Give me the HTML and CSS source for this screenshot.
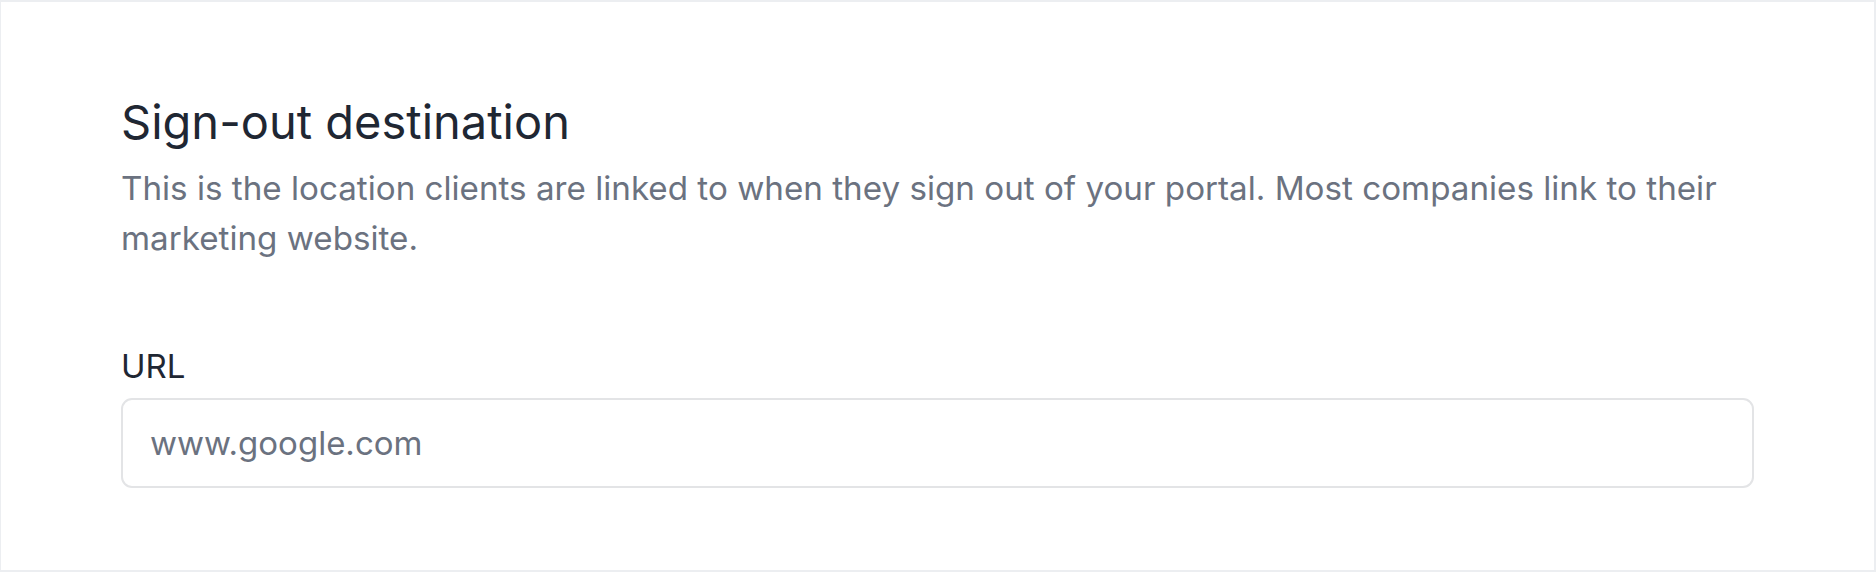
FILE: index.html
```html
<!DOCTYPE html>
<html lang="en">

<head>
  <meta charset="UTF-8">
  <title>Sign-out destination</title>
  <link rel="stylesheet" href="styles.css">
</head>

<body>
  <div class="panel">
    <div class="section">
      <h2 class="title">Sign-out destination</h2>
      <p class="desc">
        This is the location clients are linked to when they sign out of your portal. Most companies link to their
        marketing website.
      </p>
      <div class="field">
        <label for="url">URL</label>
        <input type="text" id="url" placeholder="www.google.com">
      </div>
    </div>
  </div>
</body>

</html>
```

FILE: styles.css
```css
* {
  box-sizing: border-box;
}

html,
body {
  margin: 0;
  height: 100%;
  background-color: #fff;
}

body {
  font-family: Inter, "Noto Sans", sans-serif;
}

.panel {
  height: 572px;
  border: 2px solid #eceef1;
  border-left-width: 1px;
  padding: 90px 120px 0 120px;
}

.section .title {
  margin: 0;
  font-size: 47px;
  line-height: 60px;
  font-weight: 400;
  color: #1f2733;
}

.section .desc {
  margin: 11px 0 0 0;
  font-size: 33.2px;
  line-height: 50px;
  color: #6b7280;
}

.field {
  margin-top: 77px;
}

.field label {
  display: block;
  font-size: 33px;
  line-height: 52px;
  font-weight: 400;
  color: #1f2733;
}

.field input {
  display: block;
  width: 100%;
  height: 90px;
  margin-top: 6px;
  padding: 0 27px;
  border: 2px solid #e3e4e6;
  border-radius: 11px;
  font-family: Inter, "Noto Sans", sans-serif;
  font-size: 33px;
  color: #1f2733;
  outline: none;
}

.field input::placeholder {
  color: #6b7280;
}
```
